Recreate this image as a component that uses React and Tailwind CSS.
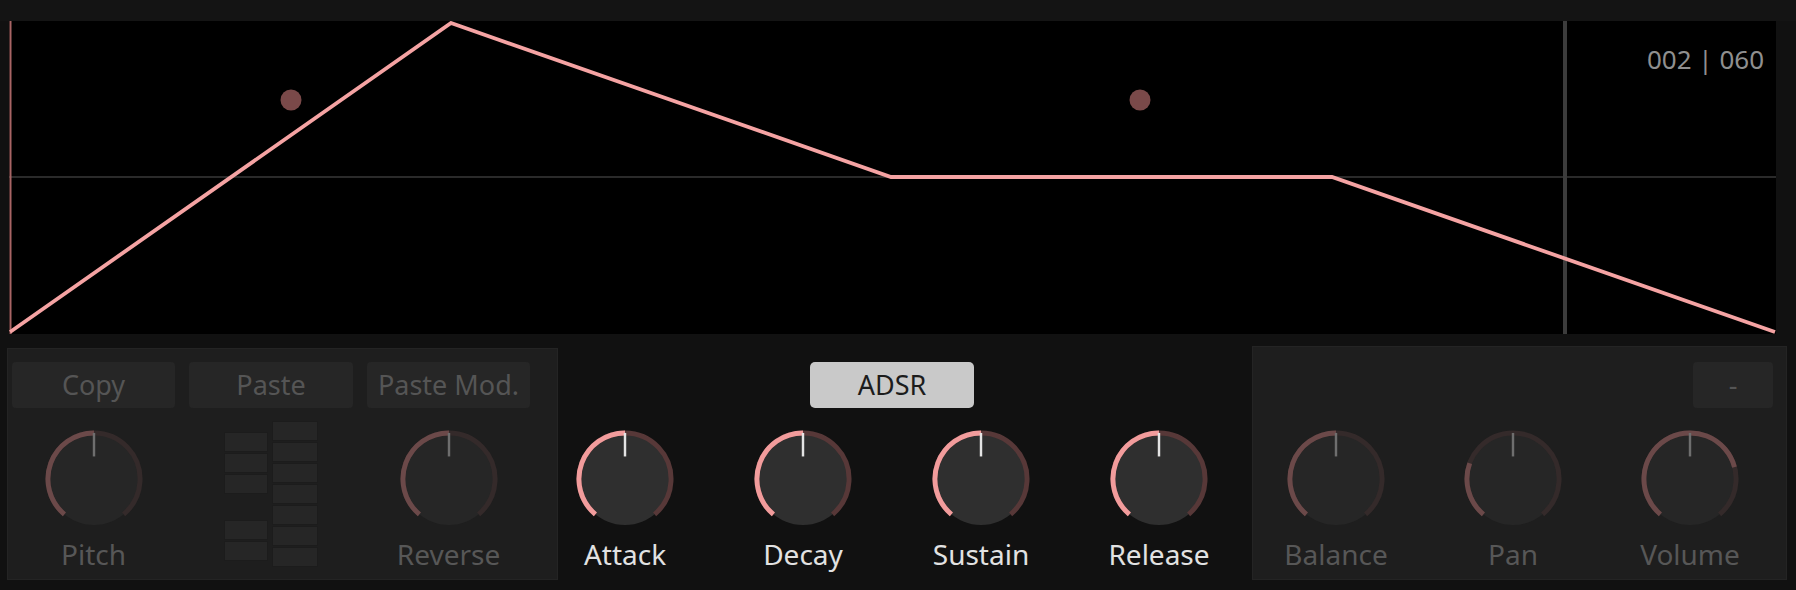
import React from "react";

function polar(r, deg) {
  const a = ((deg - 90) * Math.PI) / 180;
  return [50 + r * Math.cos(a), 50 + r * Math.sin(a)];
}

function arc(r, start, end) {
  const [x1, y1] = polar(r, start);
  const [x2, y2] = polar(r, end);
  const large = end - start > 180 ? 1 : 0;
  return `M ${x1} ${y1} A ${r} ${r} 0 ${large} 1 ${x2} ${y2}`;
}

const ACTIVE = { body: "#2f2f2f", value: "#f29c9c", track: "#573838", tick: "#e4e4e4" };
const MUTED = { body: "#262626", value: "#6b4949", track: "#342a2a", tick: "#6e6e6e" };

function Knob({ label, value = 0, muted = false }) {
  const c = muted ? MUTED : ACTIVE;
  return (
    <div className="flex w-[110px] flex-col items-center">
      <svg width="98" height="98" viewBox="0 0 100 100">
        <circle cx="50" cy="50" r="47" fill={c.body} />
        <path d={arc(47, -140, 140)} stroke={c.track} strokeWidth="5" fill="none" />
        <path d={arc(47, -140, value)} stroke={c.value} strokeWidth="5" fill="none" />
        <line x1="50" y1="3" x2="50" y2="27" stroke={c.tick} strokeWidth="2.5" />
      </svg>
      <div
        className={
          "mt-[9px] whitespace-nowrap text-[28px] leading-[34px] " +
          (muted ? "text-[#575757]" : "text-[#e2e2e2]")
        }
      >
        {label}
      </div>
    </div>
  );
}

function PanelButton({ children, className = "" }) {
  return (
    <div
      className={
        "flex h-[46px] items-center justify-center whitespace-nowrap rounded-[4px] bg-[#262626] text-[27px] text-[#555555] " +
        className
      }
    >
      {children}
    </div>
  );
}

function Cell() {
  return <div className="h-[20px] border border-[#1c1c1c] bg-[#262626]" />;
}

function Envelope() {
  return (
    <svg width="1767" height="313" viewBox="0 0 1767 313" className="block">
      <line x1="0" y1="156" x2="1767" y2="156" stroke="#2a2a2a" strokeWidth="2" />
      <line x1="1556" y1="0" x2="1556" y2="313" stroke="#3c3c3c" strokeWidth="4" />
      <line x1="1.5" y1="0" x2="1.5" y2="313" stroke="#a86565" strokeWidth="2" />
      <polyline
        points="1,311 442,2 882,156 1323,156 1766,311"
        stroke="#f5a3a3"
        strokeWidth="3.8"
        fill="none"
      />
      <circle cx="282" cy="79" r="10.5" fill="#7a4949" />
      <circle cx="1131" cy="79" r="10.5" fill="#7a4949" />
    </svg>
  );
}

export default function App() {
  return (
    <div className="h-[590px] w-[1796px] overflow-hidden bg-[#111111] font-['Noto_Sans',sans-serif]">
      <div className="h-[21px] bg-[#141414]" />

      {/* envelope display */}
      <div className="relative ml-[9px] h-[313px] w-[1767px] bg-black">
        <Envelope />
        <div className="absolute right-[12px] top-[24px] text-[26px] leading-[28px] text-[#8f8f8f]">
          002 | 060
        </div>
      </div>

      <div className="mt-[12px] flex h-[234px]">
        {/* left panel */}
        <div className="ml-[7px] mt-[2px] h-[232px] w-[551px] border border-[#242424] bg-[#1e1e1e] pl-[4px] pt-[13px]">
          <div className="grid grid-cols-[163px_164px_163px] gap-x-[14px]">
            <PanelButton>Copy</PanelButton>
            <PanelButton>Paste</PanelButton>
            <PanelButton>Paste Mod.</PanelButton>
          </div>
          <div className="mt-[22px] grid grid-cols-[163px_164px_163px] items-start gap-x-[14px]">
            <div className="flex justify-center">
              <Knob label="Pitch" value={0} muted />
            </div>
            <div className="-mt-[9px] flex justify-center gap-[4px]">
              <div className="flex w-[44px] flex-col gap-[1px] pt-[11px]">
                <Cell />
                <Cell />
                <Cell />
                <div className="h-[24px]" />
                <Cell />
                <Cell />
              </div>
              <div className="flex w-[46px] flex-col gap-[1px]">
                <Cell />
                <Cell />
                <Cell />
                <Cell />
                <Cell />
                <Cell />
                <Cell />
              </div>
            </div>
            <div className="flex justify-center">
              <Knob label="Reverse" value={0} muted />
            </div>
          </div>
        </div>

        {/* ADSR */}
        <div className="w-[694px] pl-[12px] pt-[16px]">
          <div className="flex w-[644px] flex-col items-center">
            <div className="flex h-[46px] w-[164px] items-center justify-center rounded-[5px] bg-[#c9c9c9] text-[27px] text-[#1c1c1c]">
              ADSR
            </div>
            <div className="mt-[22px] flex gap-[68px]">
              <Knob label="Attack" />
              <Knob label="Decay" />
              <Knob label="Sustain" />
              <Knob label="Release" />
            </div>
          </div>
        </div>

        {/* right panel */}
        <div className="h-[234px] w-[535px] border border-[#242424] bg-[#1e1e1e] pt-[15px]">
          <div className="flex justify-end pr-[13px]">
            <PanelButton className="w-[80px]">-</PanelButton>
          </div>
          <div className="mt-[22px] flex gap-[67px] pl-[28px]">
            <Knob label="Balance" value={0} muted />
            <Knob label="Pan" value={-70} muted />
            <Knob label="Volume" value={75} muted />
          </div>
        </div>
      </div>
    </div>
  );
}
